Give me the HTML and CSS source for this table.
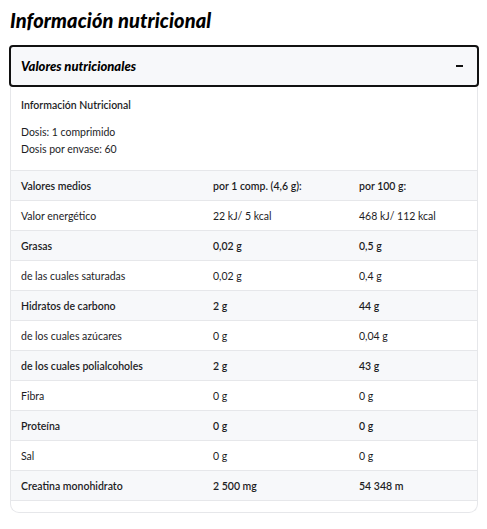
FILE: index.html
```html
<!DOCTYPE html>
<html lang="es">
<head>
    <meta charset="UTF-8">
    <meta name="viewport" content="width=device-width, initial-scale=1.0">
    <title>Información nutricional</title>
    <link rel="stylesheet" href="styles.css">
</head>
<body>

    <h2 class="section-title">Información nutricional</h2>

    <div class="accordion">
        <!-- Accordion header -->
        <div class="accordion-header">
            <span>Valores nutricionales</span>
            <span class="toggle"></span>
        </div>

        <div class="accordion-body">
            <div class="intro">
                <p class="intro-title">Información Nutricional</p>
                <p>Dosis: 1 comprimido<br>Dosis por envase: 60</p>
            </div>

            <table class="nutrition">
                <tr class="strong">
                    <td>Valores medios</td>
                    <td>por 1 comp. (4,6 g):</td>
                    <td>por 100 g:</td>
                </tr>
                <tr>
                    <td>Valor energético</td>
                    <td>22 kJ/ 5 kcal</td>
                    <td>468 kJ/ 112 kcal</td>
                </tr>
                <tr class="strong">
                    <td>Grasas</td>
                    <td>0,02 g</td>
                    <td>0,5 g</td>
                </tr>
                <tr>
                    <td>de las cuales saturadas</td>
                    <td>0,02 g</td>
                    <td>0,4 g</td>
                </tr>
                <tr class="strong">
                    <td>Hidratos de carbono</td>
                    <td>2 g</td>
                    <td>44 g</td>
                </tr>
                <tr>
                    <td>de los cuales azúcares</td>
                    <td>0 g</td>
                    <td>0,04 g</td>
                </tr>
                <tr class="strong">
                    <td>de los cuales polialcoholes</td>
                    <td>2 g</td>
                    <td>43 g</td>
                </tr>
                <tr>
                    <td>Fibra</td>
                    <td>0 g</td>
                    <td>0 g</td>
                </tr>
                <tr class="strong">
                    <td>Proteína</td>
                    <td>0 g</td>
                    <td>0 g</td>
                </tr>
                <tr>
                    <td>Sal</td>
                    <td>0 g</td>
                    <td>0 g</td>
                </tr>
                <tr class="strong">
                    <td>Creatina monohidrato</td>
                    <td>2 500 mg</td>
                    <td>54 348 m</td>
                </tr>
            </table>
        </div>
    </div>

</body>
</html>
```

FILE: styles.css
```css
/* Page */
body {
    font-family: 'Lato', sans-serif;
    color: #1d1d1f;
    background: #fff;
    margin: 0;
    padding: 0 8px 0 9px;
}

/* Big italic title */
.section-title {
    font-family: 'Lato', sans-serif;
    font-weight: 900;
    font-style: italic;
    font-size: 20px;
    letter-spacing: 0.1px;
    color: #000;
    margin: 7px 0 12px 1px;
    line-height: 26px;
}

/* Accordion */
.accordion {
    width: 470px;
}

.accordion-header {
    display: flex;
    justify-content: space-between;
    align-items: center;
    height: 38px;
    padding: 0 14px 0 10px;
    background-color: #f7f8fa;
    border: 2px solid #111;
    border-radius: 4px;
    font-weight: 900;
    font-style: italic;
    font-size: 13px;
    color: #000;
}

.toggle {
    display: block;
    width: 7px;
    height: 2px;
    background: #111;
}

.accordion-body {
    margin: 0 1px;
    border: 1px solid #e6e7ea;
    border-top: none;
    border-radius: 0 0 9px 9px;
    padding-bottom: 11px;
}

/* Intro text */
.intro {
    padding: 10px 10px 12px;
    font-size: 10.5px;
    line-height: 17px;
}

.intro p {
    margin: 0;
}

.intro-title {
    font-weight: 600;
    margin-bottom: 10px !important;
}

/* Nutrition table */
.nutrition {
    width: 100%;
    border-collapse: collapse;
    font-size: 10.5px;
}

.nutrition td {
    height: 29px;
    padding: 0 10px;
    border-top: 1px solid #e6e7ea;
    border-bottom: 1px solid #e6e7ea;
    vertical-align: middle;
}

.nutrition td:nth-child(1) {
    width: 172px;
}

.nutrition td:nth-child(2) {
    width: 126px;
}

.nutrition tr.strong td {
    background-color: #f7f8fa;
    font-weight: 600;
}
```
